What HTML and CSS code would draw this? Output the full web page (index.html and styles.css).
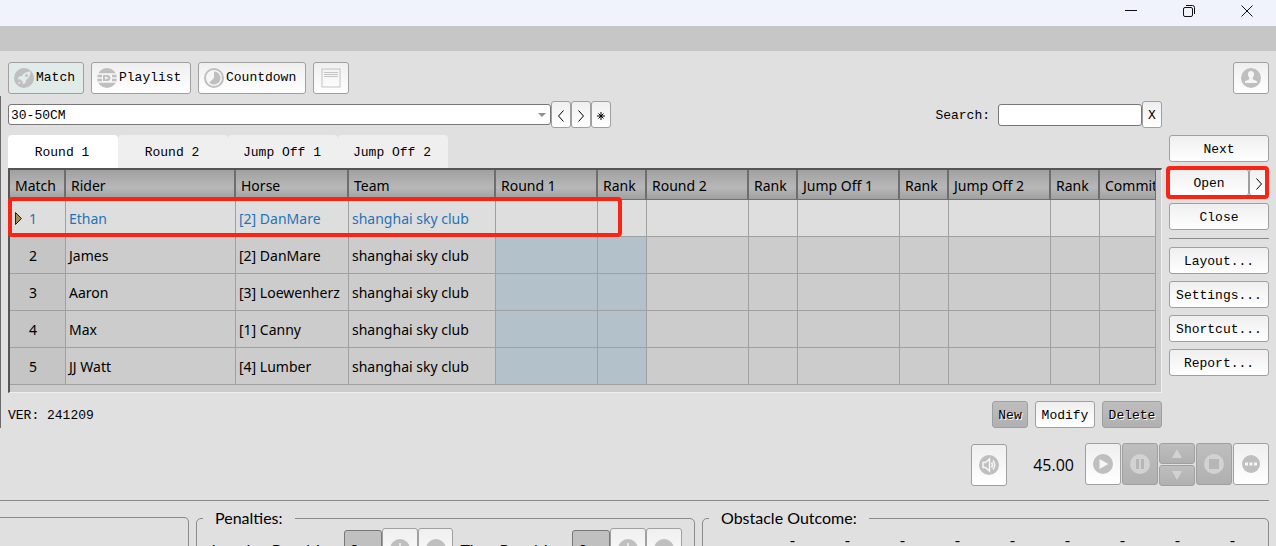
FILE: index.html
```html
<!DOCTYPE html>
<html lang="en">
<head>
  <meta charset="UTF-8">
  <meta name="viewport" content="width=device-width, initial-scale=1.0">
  <title>Match Control</title>
  <link rel="stylesheet" href="styles.css">
</head>
<body>
  <header class="titlebar">
    <button class="win-btn" aria-label="Minimize">
      <svg width="14" height="14" viewBox="0 0 14 14"><path d="M1 6.5h12"/></svg>
    </button>
    <button class="win-btn" aria-label="Restore">
      <svg width="14" height="14" viewBox="0 0 14 14"><rect x="1.5" y="3.5" width="9" height="9" rx="1.5"/><path d="M4 1.5h6.5a2 2 0 0 1 2 2V10"/></svg>
    </button>
    <button class="win-btn" aria-label="Close window">
      <svg width="14" height="14" viewBox="0 0 14 14"><path d="M1.500 1.500l11 11M12.500 1.500l-11 11"/></svg>
    </button>
  </header>
  <div class="menubar"></div>

  <nav class="toolbar">
    <button class="btn tool match active">
      <svg class="icon" viewBox="0 0 20 20"><circle cx="10" cy="10" r="10"/><path class="cut" d="M16.500 3.500c-4 0-7 1.500-8.500 4.500l-3 .5-1.500 3 2.500-.3 2.800 2.800-.3 2.500 3-1.500.5-3c3-1.500 4.500-4.500 4.500-8.500zM5.500 13.500l-1.800 3 3-1.700z"/><circle cx="12.500" cy="7.500" r="1.500"/></svg>
      Match
    </button>
    <button class="btn tool playlist">
      <svg class="icon" viewBox="0 0 20 20"><circle cx="10" cy="10" r="10"/><path class="line" d="M1 6h18M1 14h18M0 10h5M15 10h5"/><path class="cut" d="M5 6h10v8H5z"/><path d="M6 7h4.500c4 0 4 6 0 6H6z"/><path class="cut" d="M8 8.500l4 1.500-4 1.500z"/></svg>
      Playlist
    </button>
    <button class="btn tool countdown">
      <svg class="icon" viewBox="0 0 20 20"><circle cx="10" cy="10" r="10"/><circle class="cut" cx="10" cy="10" r="8"/><path d="M10 3.500a6.500 6.500 0 1 1-4.600 11.100L10 10z"/></svg>
      Countdown
    </button>
    <button class="btn tool square" aria-label="Notes">
      <svg class="icon note" viewBox="0 0 20 20"><rect x="1" y="1" width="18" height="18"/><path d="M3 4.500h14M3 6.500h14M3 8.500h14"/></svg>
    </button>
    <button class="btn tool square user" aria-label="User">
      <svg class="icon" viewBox="0 0 20 20"><circle cx="10" cy="10" r="10"/><path class="cut" d="M10 3c2.200 0 3 1.500 3 3.300 0 1.700-.6 2.700-1.300 3.500v1.400l4.300 2V15H4v-1.800l4.300-2V9.800C7.600 9 7 8 7 6.300 7 4.500 7.800 3 10 3z"/></svg>
    </button>
  </nav>

  <main class="workspace">
    <section class="content">
      <div class="filter">
        <div class="combo">
          <select aria-label="Competition"><option>30-50CM</option></select>
          <svg class="arrow" width="8" height="4" viewBox="0 0 8 4"><path d="M0 0h8L4 4z"/></svg>
        </div>
        <button class="btn mini" aria-label="Previous"><svg width="6" height="12" viewBox="0 0 6 12"><path d="M5.500.5L.5 6l5 5.500"/></svg></button>
        <button class="btn mini" aria-label="Following"><svg width="6" height="12" viewBox="0 0 6 12"><path d="M.5.5l5 5.500-5 5.500"/></svg></button>
        <button class="btn mini" aria-label="All"><svg width="8" height="8" viewBox="0 0 8 8"><path d="M4 0v8M0 4h8M1.500 1.500l5 5M6.500 1.500l-5 5"/></svg></button>
        <label class="search-label" for="search">Search:</label>
        <input class="search" id="search" type="text">
        <button class="btn mini">X</button>
      </div>

      <div class="tabs" role="tablist">
        <button class="tab selected" role="tab" aria-selected="true">Round 1</button>
        <button class="tab" role="tab">Round 2</button>
        <button class="tab" role="tab">Jump Off 1</button>
        <button class="tab" role="tab">Jump Off 2</button>
      </div>

      <div class="grid-wrap">
        <table class="grid">
          <colgroup>
            <col class="c-match"><col class="c-rider"><col class="c-horse"><col class="c-team">
            <col class="c-round"><col class="c-rank"><col class="c-round"><col class="c-rank">
            <col class="c-round"><col class="c-rank"><col class="c-round"><col class="c-rank"><col>
          </colgroup>
          <thead>
            <tr><th>Match</th><th>Rider</th><th>Horse</th><th>Team</th><th>Round 1</th><th>Rank</th><th>Round 2</th><th>Rank</th><th>Jump Off 1</th><th>Rank</th><th>Jump Off 2</th><th>Rank</th><th>Commit</th></tr>
          </thead>
          <tbody>
            <tr class="current"><td><svg class="marker" width="7" height="13" viewBox="0 0 7 13"><path d="M.5.5l6 6-6 6z"/></svg>1</td><td>Ethan</td><td>[2] DanMare</td><td>shanghai sky club</td><td></td><td></td><td></td><td></td><td></td><td></td><td></td><td></td><td></td></tr>
            <tr><td>2</td><td>James</td><td>[2] DanMare</td><td>shanghai sky club</td><td></td><td></td><td></td><td></td><td></td><td></td><td></td><td></td><td></td></tr>
            <tr><td>3</td><td>Aaron</td><td>[3] Loewenherz</td><td>shanghai sky club</td><td></td><td></td><td></td><td></td><td></td><td></td><td></td><td></td><td></td></tr>
            <tr><td>4</td><td>Max</td><td>[1] Canny</td><td>shanghai sky club</td><td></td><td></td><td></td><td></td><td></td><td></td><td></td><td></td><td></td></tr>
            <tr><td>5</td><td>JJ Watt</td><td>[4] Lumber</td><td>shanghai sky club</td><td></td><td></td><td></td><td></td><td></td><td></td><td></td><td></td><td></td></tr>
          </tbody>
        </table>
        <div class="highlight row-highlight"></div>
      </div>

      <div class="actions">
        <span class="version">VER: 241209</span>
        <button class="btn new" disabled>New</button>
        <button class="btn edit">Modify</button>
        <button class="btn edit" disabled>Delete</button>
      </div>
    </section>

    <aside class="side">
      <button class="btn">Next</button>
      <div class="split">
        <button class="btn open">Open</button>
        <button class="btn more" aria-label="Open options"><svg width="6" height="12" viewBox="0 0 6 12"><path d="M.5.5l5 5.500-5 5.500"/></svg></button>
        <div class="highlight open-highlight"></div>
      </div>
      <button class="btn">Close</button>
      <hr>
      <button class="btn">Layout...</button>
      <button class="btn">Settings...</button>
      <button class="btn">Shortcut...</button>
      <button class="btn">Report...</button>
    </aside>
  </main>

  <section class="player">
    <button class="btn media sound" aria-label="Sound">
      <svg class="icon" viewBox="0 0 20 20"><circle cx="10" cy="10" r="10"/><path class="line" d="M4 7.500h2.500l4-3.500v12l-4-3.500H4zM12.500 7.500q2 2.500 0 5M14 5.500q3.500 4.500 0 9"/></svg>
    </button>
    <output class="time">45.00</output>
    <div class="media-group">
      <button class="btn media" aria-label="Play">
        <svg class="icon" viewBox="0 0 20 20"><circle cx="10" cy="10" r="10"/><path class="cut" d="M6.500 5l9 5-9 5z"/></svg>
      </button>
      <button class="btn media" aria-label="Pause" disabled>
        <svg class="icon" viewBox="0 0 20 20"><circle cx="10" cy="10" r="10"/><path class="cut" d="M6 5h3v10H6zM11 5h3v10h-3z"/></svg>
      </button>
      <div class="stepper">
        <button class="btn step" aria-label="Up" disabled><svg width="10" height="9" viewBox="0 0 10 9"><path d="M5 0l5 9H0z"/></svg></button>
        <button class="btn step" aria-label="Down" disabled><svg width="10" height="9" viewBox="0 0 10 9"><path d="M0 0h10L5 9z"/></svg></button>
      </div>
      <button class="btn media" aria-label="Stop" disabled>
        <svg class="icon" viewBox="0 0 20 20"><circle cx="10" cy="10" r="10"/><path class="cut" d="M5 5h10v10H5z"/></svg>
      </button>
      <button class="btn media" aria-label="Options">
        <svg class="icon" viewBox="0 0 20 20"><circle cx="10" cy="10" r="9"/><path class="cut" d="M4 8.500h3v3H4zM8.500 8.500h3v3h-3zM13 8.500h3v3h-3z"/></svg>
      </button>
    </div>
  </section>

  <section class="panels">
    <fieldset class="panel blank"></fieldset>
    <fieldset class="panel penalties">
      <legend>Penalties:</legend>
      <div class="penalty-row">
        <label class="jumping" for="jumping">Jumping Penalties:</label>
        <input class="points" id="jumping" type="text" value="0">
        <button class="btn media" aria-label="Add jumping penalty"><svg class="icon" viewBox="0 0 20 20"><circle cx="10" cy="10" r="10"/><path class="line" d="M10 4v12M4 10h12"/></svg></button>
        <button class="btn media" aria-label="Remove jumping penalty"><svg class="icon" viewBox="0 0 20 20"><circle cx="10" cy="10" r="10"/><path class="line" d="M4 10h12"/></svg></button>
        <label class="timed" for="timed">Time Penalties:</label>
        <input class="points" id="timed" type="text" value="0">
        <button class="btn media" aria-label="Add time penalty"><svg class="icon" viewBox="0 0 20 20"><circle cx="10" cy="10" r="10"/><path class="line" d="M10 4v12M4 10h12"/></svg></button>
        <button class="btn media" aria-label="Remove time penalty"><svg class="icon" viewBox="0 0 20 20"><circle cx="10" cy="10" r="10"/><path class="line" d="M4 10h12"/></svg></button>
      </div>
    </fieldset>
    <fieldset class="panel outcome">
      <legend>Obstacle Outcome:</legend>
      <div class="obstacles">
        <span>-</span><span>-</span><span>-</span><span>-</span><span>-</span><span>-</span><span>-</span><span>-</span><span>-</span>
      </div>
    </fieldset>
  </section>
</body>
</html>
```

FILE: styles.css
```css
* {
  margin: 0;
  padding: 0;
  box-sizing: border-box;
}

body {
  height: 100vh;
  overflow: hidden;
  background-color: #e0e0e0;
  color: #000;
  font: 13px/16px "Liberation Mono", monospace;
}

button,
input,
select {
  font: inherit;
  color: inherit;
}

.titlebar {
  display: flex;
  justify-content: flex-end;
  height: 26px;
  background-color: #f0f3fb;
}

.win-btn {
  display: flex;
  justify-content: center;
  width: 58px;
  padding-top: 4px;
  border: none;
  background: none;
}

.win-btn svg {
  fill: none;
  stroke: #111;
}

.menubar {
  height: 25px;
  background-color: #c6c6c6;
}

/* buttons */

.btn {
  display: flex;
  align-items: center;
  justify-content: center;
  height: 27px;
  padding-top: 2px;
  border: 1px solid #a0a0a0;
  border-radius: 3px;
  background: linear-gradient(#efefef, #fff);
}

.btn:disabled {
  background: linear-gradient(#bebebe, #b0b0b0);
  color: #000;
  text-shadow: 1px 1px 0 #fff;
}

.btn svg {
  flex: none;
}

.icon {
  width: 20px;
  height: 20px;
  fill: #bfbfbf;
}

.icon .cut {
  fill: #f6f6f6;
}

.icon .line {
  fill: none;
  stroke: #f6f6f6;
  stroke-width: 1.5;
}

.btn:disabled .icon {
  fill: #d2d2d2;
}

.btn:disabled .cut {
  fill: #b6b6b6;
}

.toolbar {
  display: flex;
  gap: 7px;
  padding: 11px 7px 2px 8px;
}

.tool {
  justify-content: flex-start;
  gap: 2px;
  height: 32px;
  padding: 0 0 0 5px;
}

.match {
  width: 76px;
}

.playlist {
  width: 100px;
}

.countdown {
  width: 108px;
}

.tool.active {
  background: #e0ebea;
}

.tool.active .cut {
  fill: #e0ebea;
}

.tool.square {
  justify-content: center;
  width: 36px;
  padding: 0;
}

.tool.user {
  margin-left: auto;
}

.icon.note {
  fill: none;
  stroke: #c4c4c4;
}

/* main area */

.workspace {
  display: flex;
  gap: 7px;
  padding: 5px 7px 0 7px;
  border-left: 1px solid #6c6c6c;
}

.content {
  flex: 1;
  min-width: 0;
}

.filter {
  display: flex;
  align-items: center;
  height: 27px;
}

.combo {
  position: relative;
  width: 543px;
}

.combo select {
  appearance: none;
  display: block;
  width: 100%;
  height: 21px;
  padding: 2px 0 0 2px;
  border: 1px solid #777;
  border-radius: 3px;
  background-color: #fff;
}

.combo .arrow {
  position: absolute;
  right: 5px;
  top: 9px;
  fill: #909090;
}

.mini {
  width: 20px;
}

.mini svg,
.more svg {
  fill: none;
  stroke: #000;
}

.search-label {
  margin-left: auto;
  padding: 2px 8px 0 0;
}

.search {
  width: 144px;
  height: 22px;
  padding: 0 3px;
  border: 1px solid #777;
  border-radius: 3px;
  background-color: #fff;
}

.tabs {
  display: flex;
  margin-top: 7px;
}

.tab {
  width: 110px;
  height: 33px;
  padding: 2px 2px 0 0;
  border: none;
  border-radius: 4px 4px 0 0;
  background-color: #efefef;
}

.tab.selected {
  background-color: #fff;
}

.grid-wrap {
  position: relative;
  padding: 0 5px 7px 0;
  border: 2px solid #555;
  border-right: 1px solid #efefef;
  border-bottom: 1px solid #efefef;
  background-color: #ccc;
}

.grid {
  width: 100%;
  table-layout: fixed;
  border-collapse: separate;
  border-spacing: 0;
  font: 14px/18px "Noto Sans", sans-serif;
}

.c-match { width: 56px; }
.c-rider { width: 170px; }
.c-horse { width: 113px; }
.c-team { width: 147px; }
.c-round { width: 102px; }
.c-rank { width: 49px; }

.grid th {
  height: 30px;
  padding: 2px 0 0 5px;
  border-right: 2px solid #6e6e6e;
  border-bottom: 1px solid #707070;
  background: linear-gradient(#a0a0a0, #b8b8b8 60%, #a0a0a0);
  font-weight: normal;
  text-align: left;
  white-space: nowrap;
  overflow: hidden;
}

.grid th:last-child {
  border-right-width: 1px;
}

.grid td {
  height: 37px;
  padding: 2px 0 0 3px;
  border-right: 1px solid #a0a0a0;
  border-bottom: 1px solid #a0a0a0;
  white-space: nowrap;
}

.grid td:first-child {
  position: relative;
  padding: 2px 9px 0 0;
  background-color: #c5c5c5;
  text-align: center;
}

.grid td:nth-child(5),
.grid td:nth-child(6) {
  background-color: #b3c1cb;
}

.grid .current td {
  background-color: #dedede;
  color: #1f74b8;
}

.marker {
  position: absolute;
  left: 5px;
  top: 12px;
  fill: #a08a5c;
  stroke: #222;
}

.highlight {
  position: absolute;
  border: 4px solid #fa2314;
  border-radius: 4px;
  pointer-events: none;
}

.row-highlight {
  left: -2px;
  top: 27px;
  width: 614px;
  height: 40px;
}

.actions {
  display: flex;
  align-items: center;
  gap: 7px;
  padding-top: 8px;
}

.version {
  margin-right: auto;
  padding-top: 2px;
}

.new {
  width: 36px;
}

.edit {
  width: 60px;
}

.side {
  display: flex;
  flex-direction: column;
  gap: 7px;
  width: 100px;
  padding-top: 34px;
}

.side hr {
  margin: 1px 0;
  border: none;
  border-top: 1px solid #8a8a8a;
}

.split {
  position: relative;
  display: flex;
}

.open {
  flex: 1;
}

.more {
  width: 20px;
}

.open-highlight {
  inset: -3px 0 -3px -3px;
}

/* timer controls */

.player {
  display: flex;
  align-items: center;
  justify-content: flex-end;
  padding: 15px 7px 14px 0;
}

.media {
  width: 36px;
  height: 42px;
  padding: 0;
}

.time {
  margin: 0 11px 0 26px;
  font: 16px/20px "Open Sans", sans-serif;
}

.media-group {
  display: flex;
  gap: 1px;
}

.stepper {
  display: flex;
  flex-direction: column;
  gap: 1px;
}

.step {
  width: 36px;
  height: 21px;
  padding: 0;
}

.step svg {
  fill: #d2d2d2;
}

/* bottom panels */

.panels {
  display: flex;
  gap: 7px;
  margin-right: 7px;
  padding-top: 8px;
  border-top: 1px solid #8a8a8a;
  font: 16px/18px Lato, sans-serif;
}

.panel {
  height: 90px;
  min-width: 0;
  border: 1px solid #8a8a8a;
  border-radius: 5px;
}

.panel legend {
  margin-left: 6px;
  padding: 0 12px;
}

.blank {
  width: 189px;
  margin-top: 8px;
  border-left: none;
  border-top-left-radius: 0;
}

.penalties {
  width: 499px;
}

.outcome {
  flex: 1;
}

.penalty-row {
  display: flex;
  align-items: center;
  padding: 1px 12px;
}

.jumping,
.timed {
  padding-top: 2px;
}

.jumping {
  width: 135px;
}

.timed {
  width: 119px;
  padding-left: 7px;
}

.points {
  width: 38px;
  height: 38px;
  padding-left: 5px;
  border: 1px solid #777;
  border-radius: 3px;
  background-color: #c0c0c0;
}

.obstacles {
  display: grid;
  grid-template-columns: repeat(9, 1fr);
  padding: 4px 8px 0 62px;
  text-align: center;
}
```
